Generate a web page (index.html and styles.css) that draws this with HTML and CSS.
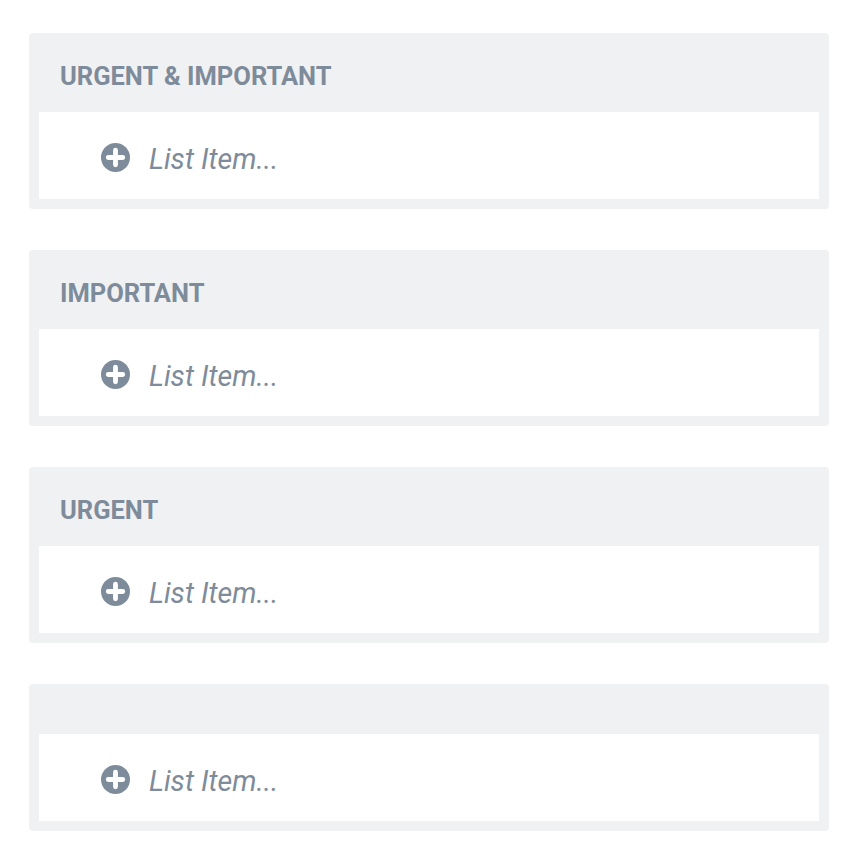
FILE: index.html
```html
<!DOCTYPE html>
<html>
<head>
<meta charset="utf-8">
<link rel="stylesheet" href="styles.css">
</head>
<body>
<div class="board">
  <section class="card">
    <h2 class="card-title">URGENT &amp; IMPORTANT</h2>
    <div class="card-body">
      <div class="add-row">
        <svg class="add-icon" viewBox="0 0 30 30" aria-hidden="true"><circle cx="15" cy="15" r="15" fill="#7d8b9a"/><path d="M15 7.5v15M7.5 15h15" stroke="#fff" stroke-width="5" stroke-linecap="round"/></svg>
        <span class="add-label">List Item...</span>
      </div>
    </div>
  </section>
  <section class="card">
    <h2 class="card-title">IMPORTANT</h2>
    <div class="card-body">
      <div class="add-row">
        <svg class="add-icon" viewBox="0 0 30 30" aria-hidden="true"><circle cx="15" cy="15" r="15" fill="#7d8b9a"/><path d="M15 7.5v15M7.5 15h15" stroke="#fff" stroke-width="5" stroke-linecap="round"/></svg>
        <span class="add-label">List Item...</span>
      </div>
    </div>
  </section>
  <section class="card">
    <h2 class="card-title">URGENT</h2>
    <div class="card-body">
      <div class="add-row">
        <svg class="add-icon" viewBox="0 0 30 30" aria-hidden="true"><circle cx="15" cy="15" r="15" fill="#7d8b9a"/><path d="M15 7.5v15M7.5 15h15" stroke="#fff" stroke-width="5" stroke-linecap="round"/></svg>
        <span class="add-label">List Item...</span>
      </div>
    </div>
  </section>
  <section class="card">
    <h2 class="card-title card-title-empty"></h2>
    <div class="card-body">
      <div class="add-row">
        <svg class="add-icon" viewBox="0 0 30 30" aria-hidden="true"><circle cx="15" cy="15" r="15" fill="#7d8b9a"/><path d="M15 7.5v15M7.5 15h15" stroke="#fff" stroke-width="5" stroke-linecap="round"/></svg>
        <span class="add-label">List Item...</span>
      </div>
    </div>
  </section>
</div>
</body>
</html>
```
FILE: styles.css
```css
* { box-sizing: border-box; }
html, body { margin: 0; padding: 0; background: #fff; }
body { font-family: Roboto, "Liberation Sans", sans-serif; color: #7d8b9a; }
.board {
  width: 866px;
  padding: 33px 37px 0 29px;
  display: flex;
  flex-direction: column;
  gap: 41px;
}
.card {
  width: 800px;
  background: #f0f1f3;
  border-radius: 4px;
  padding: 0 10px 10px 10px;
}
.card-title {
  margin: 0;
  padding: 29px 21px 21px 21px;
  font-size: 25.5px;
  line-height: 29px;
  font-weight: 700;
  color: #7d8b9a;
}
.card-title-empty { height: 50px; padding: 0; }
.card-body {
  background: #fff;
  height: 87px;
}
.add-row {
  display: flex;
  align-items: flex-start;
  padding: 31px 0 0 62px;
}
.add-icon {
  width: 29px;
  height: 29px;
  flex: none;
}
.add-label {
  margin: 1px 0 0 19px;
  font-size: 28.5px;
  line-height: 32px;
  font-style: italic;
  color: #7d8b9a;
}
```
